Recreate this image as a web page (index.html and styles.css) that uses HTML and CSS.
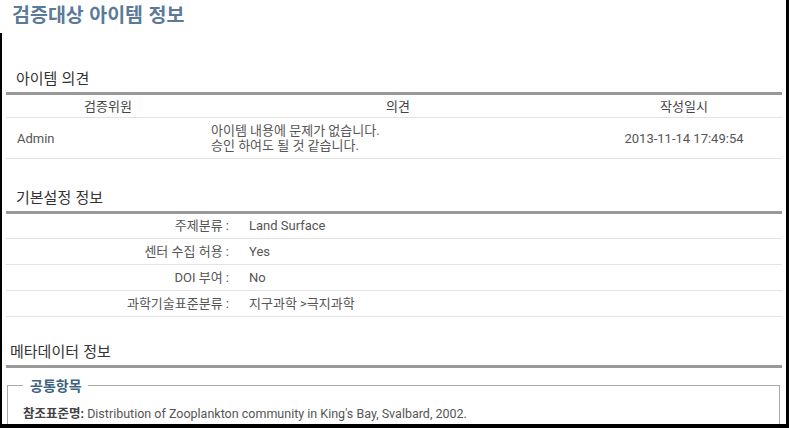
FILE: index.html
```html
<!DOCTYPE html>
<html lang="ko">
<head>
<meta charset="utf-8">
<link rel="stylesheet" href="styles.css">
</head>
<body>
<div class="frame">
  <h1 class="title">검증대상 아이템 정보</h1>
  <div class="content">
    <section class="section s1">
      <h2 class="sec-head">아이템 의견</h2>
      <div class="op-table">
        <div class="op-row op-head">
          <div class="c1">검증위원</div>
          <div class="c2">의견</div>
          <div class="c3">작성일시</div>
        </div>
        <div class="op-row op-data">
          <div class="c1 left">Admin</div>
          <div class="c2 left">아이템 내용에 문제가 없습니다.<br>승인 하여도 될 것 같습니다.</div>
          <div class="c3">2013-11-14 17:49:54</div>
        </div>
      </div>
    </section>

    <section class="section s2">
      <h2 class="sec-head">기본설정 정보</h2>
      <div class="kv-row first"><div class="k">주제분류 :</div><div class="v">Land Surface</div></div>
      <div class="kv-row"><div class="k">센터 수집 허용 :</div><div class="v">Yes</div></div>
      <div class="kv-row"><div class="k">DOI 부여 :</div><div class="v">No</div></div>
      <div class="kv-row"><div class="k">과학기술표준분류 :</div><div class="v">지구과학 &gt;극지과학</div></div>
    </section>

    <section class="section s3">
      <h2 class="sec-head meta">메타데이터 정보</h2>
      <fieldset class="group">
        <legend class="group-title">공통항목</legend>
        <p class="ref"><b>참조표준명:</b> Distribution of Zooplankton community in King's Bay, Svalbard, 2002.</p>
      </fieldset>
    </section>
  </div>
</div>
</body>
</html>
```
FILE: styles.css
```css
html, body {
  margin: 0;
  padding: 0;
  background: #fff;
}
body {
  font-family: Roboto, "Noto Sans CJK KR", sans-serif;
  font-size: 13px;
  color: #555;
  width: 789px;
  height: 428px;
  overflow: hidden;
}
.frame {
  height: 424px;
  border-right: 3px solid #000;
  border-bottom: 4px solid #000;
  display: flex;
  flex-direction: column;
  overflow: hidden;
}
.title {
  flex-shrink: 0;
  margin: 0;
  height: 33px;
  padding: 1px 0 0 12px;
  box-sizing: border-box;
  font-family: "Noto Sans CJK KR", sans-serif;
  font-size: 19.5px;
  line-height: 26px;
  font-weight: bold;
  color: #5a7a98;
}
.content {
  flex: 1;
  min-height: 0;
  border-left: 2px solid #000;
  padding: 0 4px 0 4px;
  overflow: hidden;
}
.section.s1 { margin-top: 35px; }
.section.s2 { margin-top: 28px; }
.section.s3 { margin-top: 24px; }
.sec-head {
  margin: 0;
  padding: 0 0 4px 10px;
  font-family: "Noto Sans CJK KR", sans-serif;
  font-size: 15px;
  line-height: 20px;
  font-weight: normal;
  color: #333;
  border-bottom: 3px solid #999;
}
.sec-head.meta { padding-left: 4px; }

.op-row {
  display: flex;
  border-bottom: 1px solid #e3e3e3;
}
.op-head { height: 21px; padding-top: 1px; align-items: center; color: #444; line-height: 16px; }
.op-data { height: 40px; align-items: center; line-height: 15px; }
.c1 { width: 204px; text-align: center; }
.c2 { flex: 1; text-align: center; }
.c3 { width: 196px; text-align: center; }
.c1.left { text-align: left; padding-left: 11px; box-sizing: border-box; }
.c2.left { text-align: left; padding-left: 1px; }

.kv-row {
  display: flex;
  height: 25px;
  align-items: center;
  line-height: 16px;
  border-bottom: 1px solid #e3e3e3;
}
.kv-row.first { height: 24px; }
.k { width: 223px; text-align: right; }
.v { padding-left: 20px; }

.group {
  margin: 8px 2px 0 1px;
  padding: 11px 14px 8px 15px;
  border: 1px solid #aaa;
  border-bottom: none;
}
.group-title {
  margin-left: 0;
  padding: 0 6px 0 7px;
  font-family: "Noto Sans CJK KR", sans-serif;
  font-size: 14px;
  line-height: 18px;
  color: #3e6283;
  font-weight: bold;
}
.ref {
  margin: 0;
  font-size: 12.5px;
  line-height: 18px;
}
.ref b { color: #444; }
```
